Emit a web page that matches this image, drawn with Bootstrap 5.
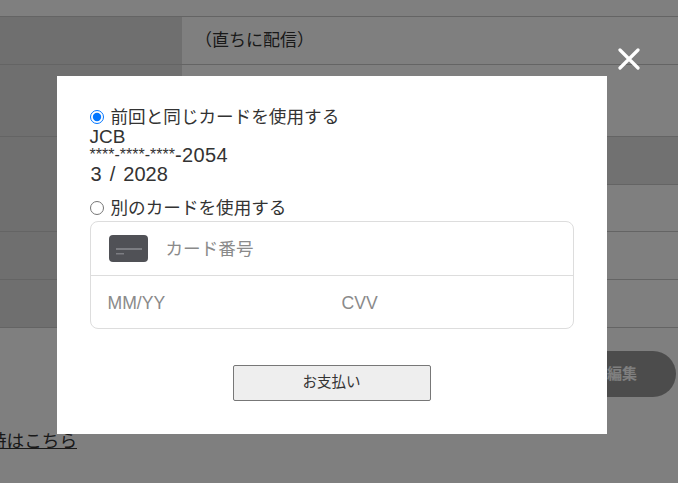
<!DOCTYPE html>
<html lang="ja">
<head>
  <meta charset="UTF-8" />
  <meta name="viewport" content="width=device-width, initial-scale=1.0"/>
  <title>お支払い</title>
  <link href="https://cdn.jsdelivr.net/npm/bootstrap@5.3.0/dist/css/bootstrap.min.css" rel="stylesheet"/>
  <style>
    body { font-family: "Liberation Sans", "Noto Sans CJK JP", sans-serif; color: #333; overflow: hidden; height: 483px; }
    .order-table { margin-top: 16px; width: 100%; border-collapse: collapse; font-size: 17px; }
    .order-table td { border-top: 1px solid #c8c8c8; border-bottom: 1px solid #c8c8c8; padding: 0 0 0 13px; }
    .order-table th { width: 182px; background: #dfdfdf; border-top: 1px solid #c8c8c8; border-bottom: 1px solid #c8c8c8; }
    .row-a { height: 48px; }
    .row-b { height: 72px; }
    .row-c { height: 47px; }
    .row-shade td { background: #e2e2e2; }
    .edit-row { margin-top: 23px; padding-right: 2px; }
    .edit-pill { width: 200px; height: 46px; border-radius: 23px; background: #999; color: #fff; font-weight: 700; font-size: 15px; padding-right: 39px; }
    .note-link { margin-top: 31px; width: 77px; font-size: 17.6px; }
    .note-link a { color: #333; }
    .pay-overlay { position: fixed; inset: 0; background: rgba(0, 0, 0, .5); padding: 76px 15px 0 0; }
    .pay-box { width: 550px; height: 358px; background: #fff; padding: 31px 33px 0; position: relative; }
    .close-x { position: absolute; left: 560px; top: -29px; width: 24px; height: 24px; padding: 0; border: 0; background: none; }
    .pay-option { font-size: 17.6px; line-height: 20px; color: #333; }
    .pay-option input { width: 14px; height: 14px; margin: 0 7px 0 0; flex: none; }
    .saved-card { font-size: 19px; line-height: 18px; margin: 1px 0 14px; color: #333; }
    .saved-card .stars { font-size: 16px; vertical-align: 2px; }
    .saved-card .card-last { font-size: 20px; letter-spacing: .4px; }
    .saved-card .card-date { font-size: 20px; word-spacing: 2.5px; margin-left: 1px; }
    .card-field { width: 484px; height: 108px; border: 1px solid #ddd; border-radius: 8px; margin-top: 3px; }
    .card-num { height: 54px; border-bottom: 1px solid #ddd; padding-left: 18px; }
    .card-pic { width: 39px; height: 27px; flex: none; margin-right: 18px; }
    .card-exp { height: 53px; }
    .field-input { border: 0; outline: 0; padding: 2px 0 0; font-size: 17.6px; background: none; min-width: 0; }
    .field-input::placeholder { color: #8a8a8a; }
    .field-half { width: 234px; padding-left: 17px; }
    .pay-btn { width: 198px; height: 36px; background: #eee; border: 1px solid #777; border-radius: 2px; font-size: 14.5px; color: #333; padding: 0; margin-top: 36px; }
  </style>
</head>
<body>
  <!-- page behind the modal -->
  <table class="order-table">
    <tr class="row-a"><th></th><td>（直ちに配信）</td></tr>
    <tr class="row-b"><th></th><td></td></tr>
    <tr class="row-a row-shade"><th rowspan="2"></th><td></td></tr>
    <tr class="row-c"><td></td></tr>
    <tr class="row-a"><th></th><td></td></tr>
    <tr class="row-a"><th></th><td></td></tr>
  </table>
  <div class="d-flex justify-content-end edit-row">
    <div class="edit-pill d-flex align-items-center justify-content-end">編集</div>
  </div>
  <div class="note-link d-flex justify-content-end overflow-hidden text-nowrap">
    <a href="#">変更時はこちら</a>
  </div>

  <!-- modal -->
  <div class="pay-overlay d-flex justify-content-center align-items-start">
    <div class="pay-box">
      <button class="close-x" type="button" aria-label="閉じる">
        <svg width="24" height="24" viewBox="0 0 24 24"><path d="M3 2l18 18M21 2l-18 18" stroke="#fff" stroke-width="3.2" stroke-linecap="round" fill="none"/></svg>
      </button>
      <form>
        <label class="pay-option d-flex align-items-center">
          <input type="radio" name="cardChoice" checked>前回と同じカードを使用する
        </label>
        <p class="saved-card">JCB<br><span class="stars">****-****-****</span><span class="card-last">-2054</span><br><span class="card-date">3 / 2028</span></p>
        <label class="pay-option d-flex align-items-center">
          <input type="radio" name="cardChoice">別のカードを使用する
        </label>
        <div class="card-field">
          <div class="card-num d-flex align-items-center">
            <svg class="card-pic" viewBox="0 0 39 27"><rect width="39" height="27" rx="4" fill="#505156"/><rect x="7" y="13" width="26" height="2" fill="#7c7d82"/><rect x="7" y="18" width="8" height="1.5" fill="#7c7d82"/></svg>
            <input class="field-input flex-grow-1" type="text" placeholder="カード番号">
          </div>
          <div class="card-exp d-flex align-items-center">
            <div class="field-half"><input class="field-input w-100" type="text" placeholder="MM/YY"></div>
            <div class="field-half"><input class="field-input w-100" type="text" placeholder="CVV"></div>
          </div>
        </div>
        <div class="text-center">
          <button class="pay-btn" type="button">お支払い</button>
        </div>
      </form>
    </div>
  </div>

  <script src="https://cdn.jsdelivr.net/npm/bootstrap@5.3.0/dist/js/bootstrap.bundle.min.js"></script>
</body>
</html>
